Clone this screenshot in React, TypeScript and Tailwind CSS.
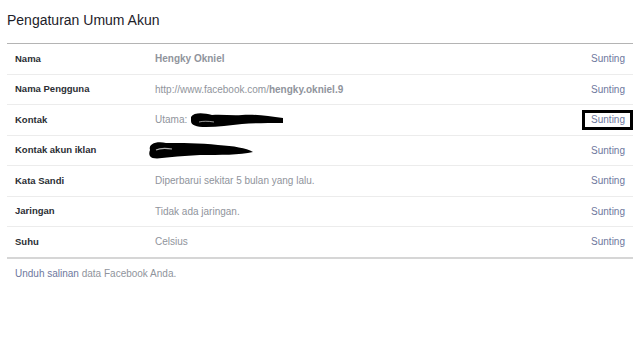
const rows = [
  { label: "Nama", value: <span className="font-bold">Hengky Okniel</span> },
  {
    label: "Nama Pengguna",
    value: (
      <>
        http://www.facebook.com/<span className="font-bold">hengky.okniel.9</span>
      </>
    ),
  },
  { label: "Kontak", value: "kontak", boxed: true },
  { label: "Kontak akun iklan", value: "iklan" },
  { label: "Kata Sandi", value: "Diperbarui sekitar 5 bulan yang lalu." },
  { label: "Jaringan", value: "Tidak ada jaringan." },
  { label: "Suhu", value: "Celsius" },
];

function ScribbleKontak() {
  return (
    <svg width="94" height="16" viewBox="0 0 94 16" className="ml-[3px] shrink-0">
      <path
        d="M1,5 C4,0 14,1 22,3 C32,2 42,4 52,3 C64,2 78,4 93,6 L93,11 C78,11 64,11 52,12 C40,13 28,15 16,15 C6,15 1,13 1,9 Z"
        fill="#000"
      />
      <path d="M9,10 C13,9 18,9 24,10" stroke="#fff" strokeWidth="1" fill="none" opacity="0.6" />
    </svg>
  );
}

function ScribbleIklan() {
  return (
    <svg width="106" height="18" viewBox="0 0 106 18" className="-ml-[7px] shrink-0">
      <path
        d="M2,9 C0,2 10,0 18,2 C32,2 52,2 70,4 C86,5 98,7 105,11 C92,14 72,14 52,14 C36,15 22,16 9,17.5 C2,17.5 0,14 2,9 Z"
        fill="#000"
      />
      <path d="M8,9 C12,7 17,7 24,8" stroke="#fff" strokeWidth="1.2" fill="none" opacity="0.7" />
    </svg>
  );
}

export default function App() {
  return (
    <div className="w-[640px] h-[350px] bg-white px-[7px] font-['Liberation_Sans',Arial,sans-serif]">
      <div className="h-[43px] pt-[11px] text-[14px] leading-[18px] text-[#1d2129]">
        Pengaturan Umum Akun
      </div>
      <div className="border-t border-[#b4b4b4]">
        {rows.map((row, index) => (
          <div
            key={index}
            className={
              index === rows.length - 1
                ? "relative flex items-center h-[31.5px] px-[8px] border-b-2 border-[#d6d6d6]"
                : "relative flex items-center h-[30.5px] px-[8px] border-b border-[#ececec]"
            }
          >
            <div className="w-[140px] text-[9.5px] font-bold text-[#2b2e33]">{row.label}</div>
            <div className="flex-1 flex items-center text-[10px] text-[#90949c]">
              {row.value === "kontak" ? (
                <>
                  Utama: <ScribbleKontak />
                </>
              ) : row.value === "iklan" ? (
                <ScribbleIklan />
              ) : (
                row.value
              )}
            </div>
            <div className="text-[10px] text-[#6e789e]">Sunting</div>
            {row.boxed && (
              <div className="absolute right-0 top-[5px] w-[51px] h-[20px] border-[3px] border-black" />
            )}
          </div>
        ))}
      </div>
      <div className="pt-[7px] px-[8px] text-[10px] text-[#90949c]">
        <span className="text-[#6e789e]">Unduh salinan</span> data Facebook Anda.
      </div>
    </div>
  );
}
